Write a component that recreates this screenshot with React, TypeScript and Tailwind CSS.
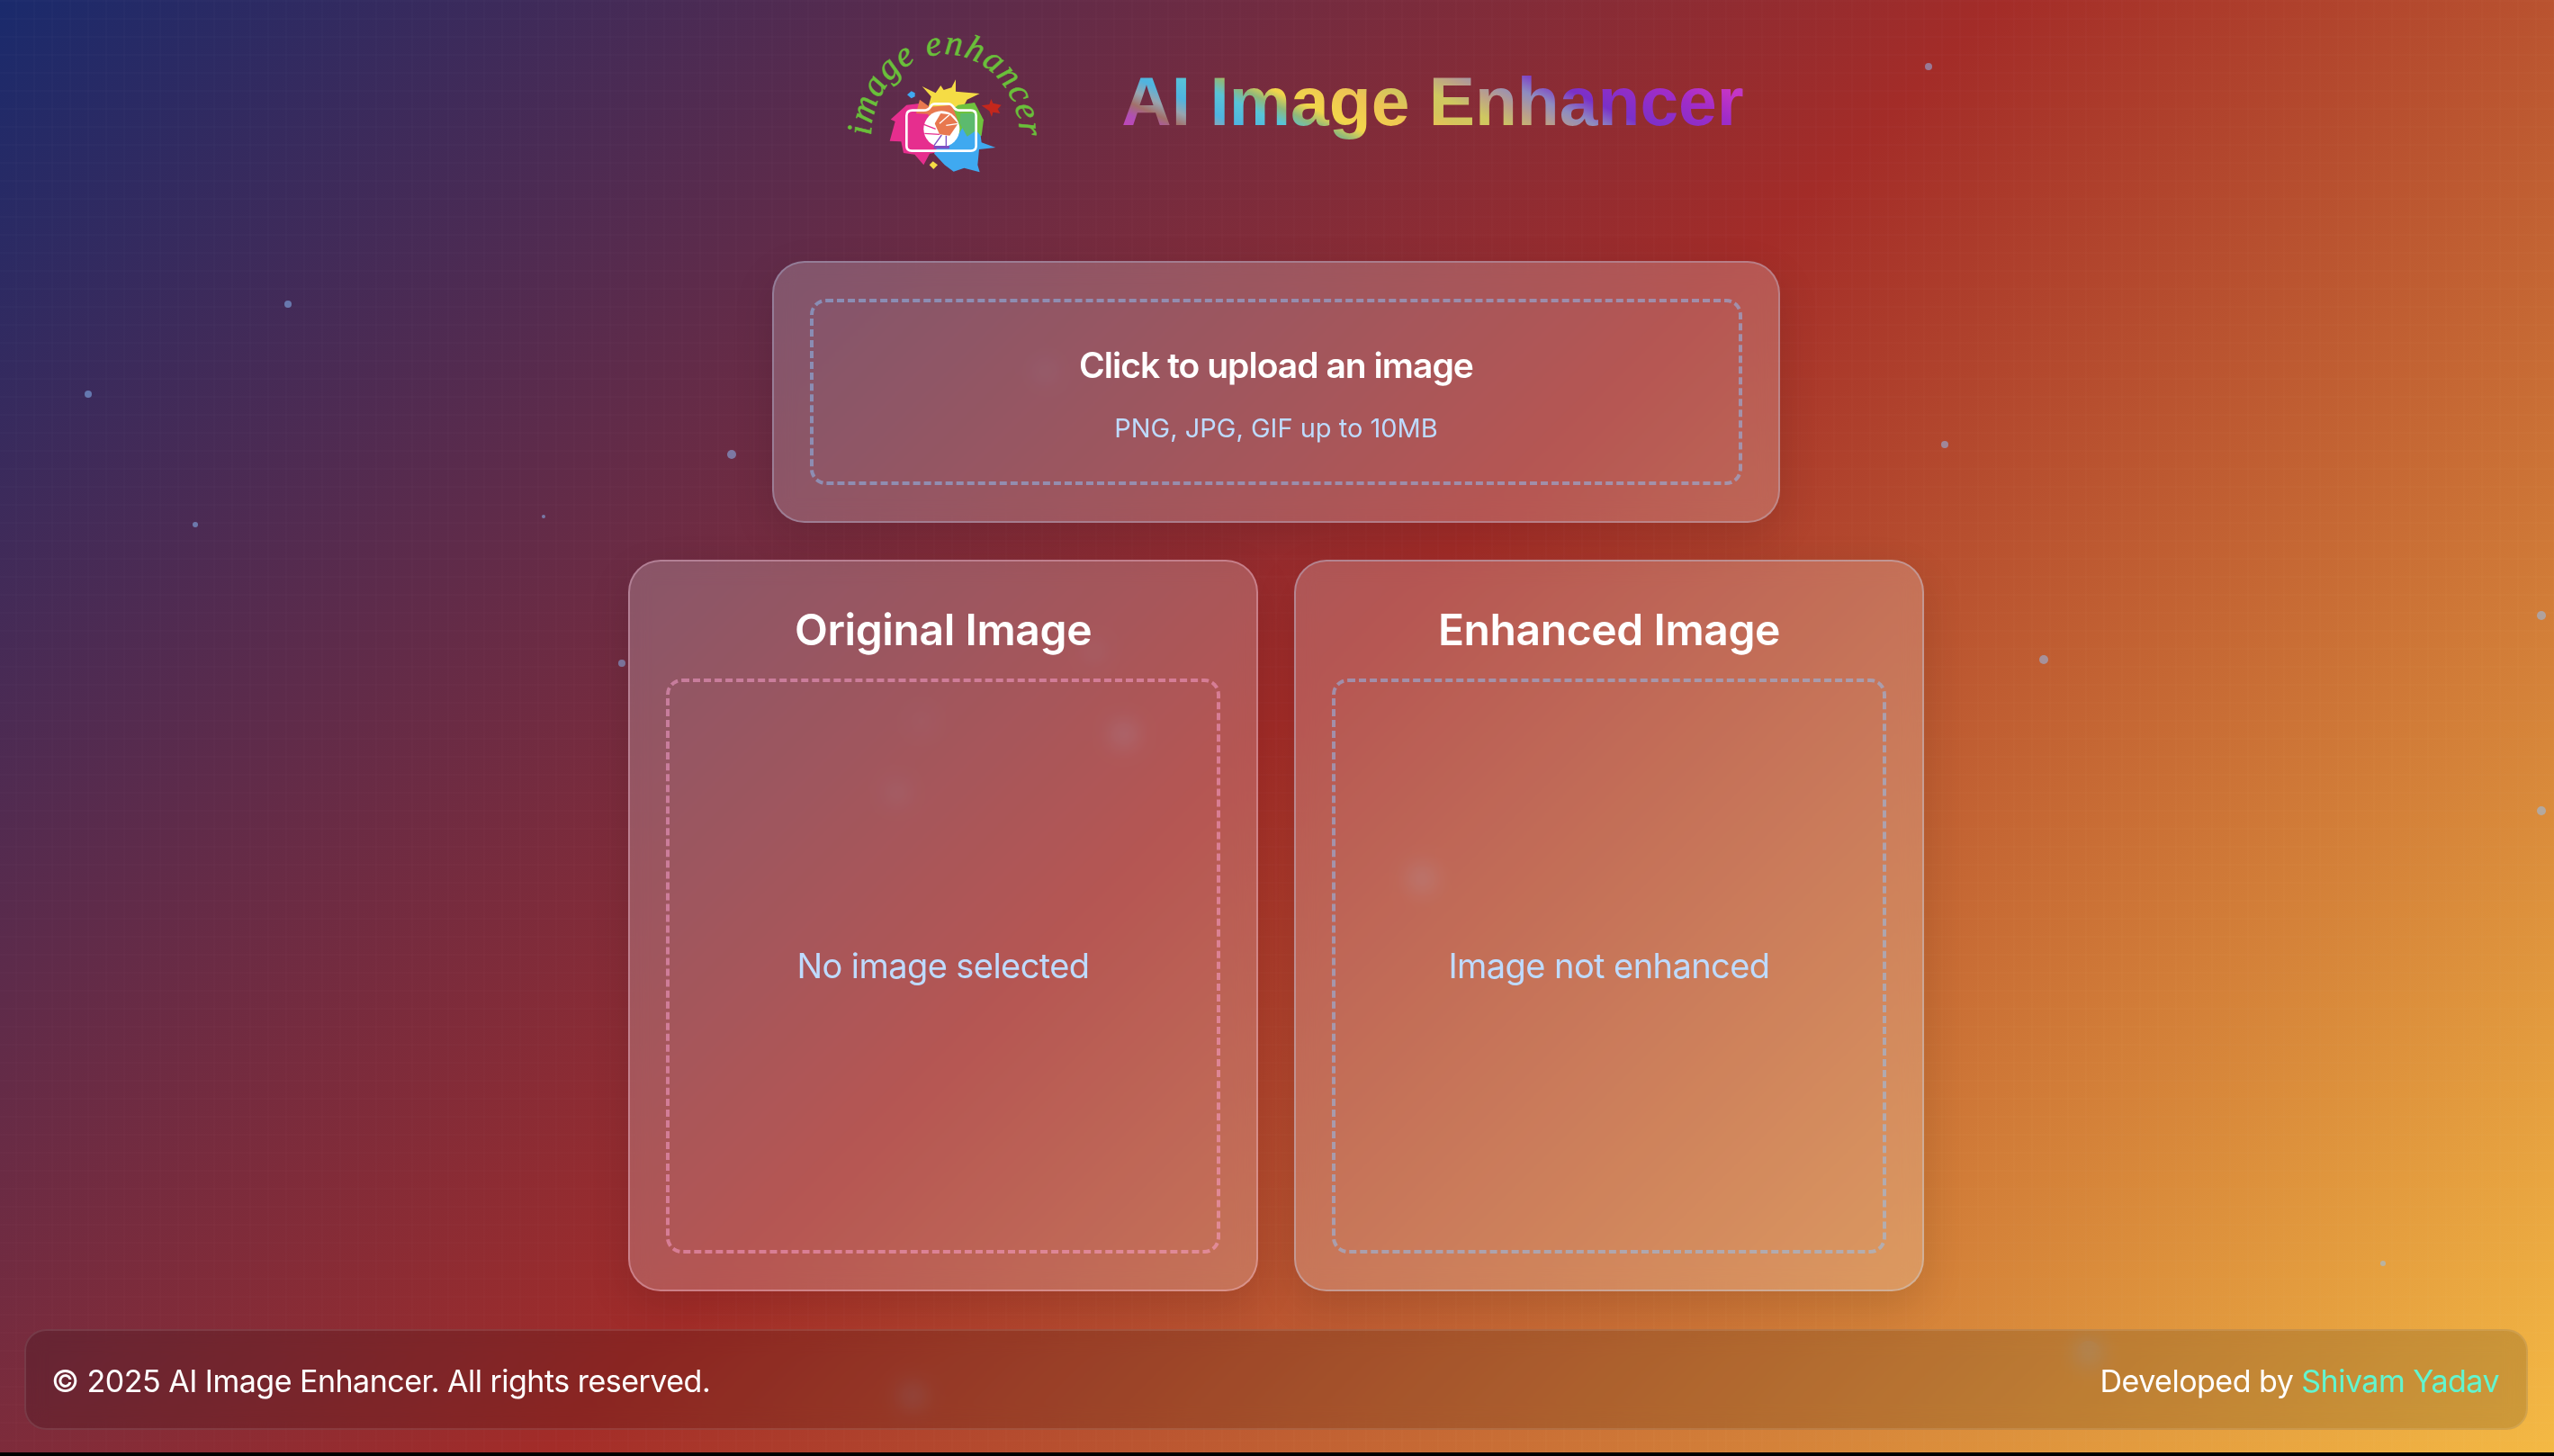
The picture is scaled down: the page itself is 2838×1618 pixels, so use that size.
const dots = [
  { x: 2143, y: 74, s: 8, o: 0.5 },
  { x: 320, y: 338, s: 8, o: 0.5 },
  { x: 98, y: 438, s: 8, o: 0.5 },
  { x: 813, y: 505, s: 10, o: 0.5 },
  { x: 217, y: 583, s: 6, o: 0.5 },
  { x: 604, y: 574, s: 4, o: 0.5 },
  { x: 2161, y: 494, s: 8, o: 0.5 },
  { x: 691, y: 737, s: 8, o: 0.5 },
  { x: 2271, y: 733, s: 10, o: 0.5 },
  { x: 2824, y: 684, s: 10, o: 0.5 },
  { x: 2824, y: 901, s: 10, o: 0.5 },
  { x: 2648, y: 1404, s: 6, o: 0.5 },
  { x: 1162, y: 413, s: 20, o: 0.12 },
  { x: 1216, y: 724, s: 20, o: 0.12 },
  { x: 1249, y: 816, s: 26, o: 0.2 },
  { x: 997, y: 881, s: 22, o: 0.12 },
  { x: 1024, y: 802, s: 18, o: 0.1 },
  { x: 1580, y: 976, s: 28, o: 0.2 },
  { x: 1014, y: 1551, s: 26, o: 0.2 },
  { x: 2321, y: 1503, s: 26, o: 0.3 },
];

function Logo() {
  return (
    <svg viewBox="0 0 780 570" className="w-[260px] h-[190px] mt-[6px] shrink-0">
      <path id="logoArc" d="M150 392 A245 272 0 0 1 645 400" fill="none" />
      <text fill="#6abf3a" stroke="#6abf3a" strokeWidth="1.5" fontFamily="'Liberation Serif', serif" fontStyle="italic" fontSize="118">
        <textPath href="#logoArc" textLength="815" lengthAdjust="spacing">image enhancer</textPath>
      </text>
      <path d="M320 228 L365 250 L382 225 L392 240 L418 232 L432 205 L432 245 L512 252 L470 272 L450 310 L340 300 L350 262 Z" fill="#f5dc45" />
      <path d="M268 290 L310 285 L340 300 L385 370 L420 440 L345 452 L325 490 L295 455 L258 450 L250 412 L212 410 L230 345 L215 338 Z" fill="#e62e8e" />
      <path d="M440 290 L495 282 L525 340 L518 392 L450 430 L410 370 L415 310 Z" fill="#6fc23e" />
      <path d="M470 340 L515 392 L518 415 L565 432 L510 438 L505 490 L512 514 L460 500 L425 512 L395 490 L360 452 L385 400 L440 390 Z" fill="#3fa9f0" />
      <path d="M312 272 L345 296 L420 290 L440 345 L410 395 L360 380 L340 320 L300 318 Z" fill="#e8784f" />
      <path d="M448 318 L500 318 L500 375 L470 395 L445 350 Z" fill="#5cba6e" />
      <path d="M550 270 L556 284 L584 290 L572 304 L580 318 L556 314 L552 330 L544 310 L518 292 L544 288 Z" fill="#c4271c" />
      <path d="M284 244 L296 250 L296 262 L284 268 L270 256 Z" fill="#3fa9f0" />
      <path d="M356 478 L372 490 L358 504 L344 490 Z" fill="#f5dc45" />
      <circle cx="385" cy="370" r="60" fill="#ffffff" />
      <path d="M382 318 L412 322 L440 352 L412 392 L378 388 L362 352 Z" fill="#e8784f" />
      <g stroke="#ffffff" strokeWidth="4">
        <path d="M360 352 L368 318" />
        <path d="M412 322 L378 352" />
        <path d="M440 352 L400 358" />
      </g>
      <g stroke="#e62e8e" strokeWidth="4">
        <path d="M326 355 L365 370" />
        <path d="M328 385 L378 388" />
      </g>
      <g stroke="#7c4fc4" strokeWidth="4">
        <path d="M360 425 L385 390" />
        <path d="M400 428 L400 392" />
      </g>
      <path d="M360 426 L412 426 L410 436 L358 436 Z" fill="#7c4fc4" />
      <path
        d="M288 308 L325 308 Q340 308 348 296 L352 290 Q356 286 362 286 L408 286 Q414 286 418 290 L424 296 Q432 308 446 308 L482 308 Q500 308 500 326 L500 426 Q500 443 482 443 L286 443 Q268 443 268 426 L268 326 Q268 308 288 308 Z"
        fill="none"
        stroke="#ffffff"
        strokeWidth="8"
      />
    </svg>
  );
}

export default function App() {
  return (
    <div className="h-screen bg-black overflow-hidden font-['Inter',sans-serif]">
      <div className="relative h-[1614px] bg-[linear-gradient(135deg,#1a2a6c,#a32c28,#f4b944)]">
        <div className="absolute inset-0 bg-[linear-gradient(rgba(255,255,255,0.013)_2px,transparent_2px),linear-gradient(90deg,rgba(255,255,255,0.013)_2px,transparent_2px)] bg-[size:20px_20px] bg-[position:17px_0px]" />
        {dots.map((d) => (
          <span
            key={d.x}
            className="absolute rounded-full bg-blue-300"
            style={{ left: d.x - d.s / 2, top: d.y - d.s / 2, width: d.s, height: d.s, opacity: d.o }}
          />
        ))}

        <div className="relative flex flex-col items-center pr-[2px]">
          <header className="h-[224px] flex items-center justify-center gap-[68px] pl-5">
            <Logo />
            <h1 className="text-[76.8px] font-bold leading-[90px] font-['Liberation_Sans',sans-serif] text-transparent bg-clip-text bg-[linear-gradient(25deg,#d23cc0,#b04fb5_8%,#a2706a_11.5%,#97a5b0_15%,#4fb4e0_19%,#58c4d8_25%,#8fb87a_29%,#f2d64b_33%,#eec454_42%,#d5c55c_47%,#cfc860_52%,#bba08a_58%,#8e8cc0_64%,#7a30c8_70%,#a02cc8_82%,#c535c5_90%,#a050d0)]">
              AI Image Enhancer
            </h1>
          </header>

          <div className="mt-[66px] w-[1120px] h-[291px] rounded-[36px] border-2 border-blue-200/30 bg-white/20 backdrop-blur-md shadow-[0_16px_48px_rgba(0,0,0,0.12)] p-[40px]">
            <div className="h-full flex flex-col items-center justify-center rounded-[18px] border-4 border-dashed border-blue-300/50">
              <p className="text-[39px] leading-[60px] font-semibold tracking-[-0.025em] text-white">Click to upload an image</p>
              <p className="mt-[20px] text-[29px] leading-[40px] text-blue-200">PNG, JPG, GIF up to 10MB</p>
            </div>
          </div>

          <div className="mt-[41px] flex gap-[40px]">
            <div className="w-[700px] h-[813px] flex flex-col rounded-[36px] border-2 border-pink-200/35 bg-white/20 backdrop-blur-md shadow-[0_16px_48px_rgba(0,0,0,0.12)] p-[40px]">
              <h2 className="text-[48px] leading-[48px] font-semibold tracking-[-0.008em] text-white text-center mt-[12px] mb-[30px]">Original Image</h2>
              <div className="flex-1 flex items-center justify-center rounded-[18px] border-4 border-dashed border-pink-300/50">
                <p className="text-[38px] tracking-[-0.015em] text-blue-200">No image selected</p>
              </div>
            </div>
            <div className="w-[700px] h-[813px] flex flex-col rounded-[36px] border-2 border-blue-200/35 bg-white/20 backdrop-blur-md shadow-[0_16px_48px_rgba(0,0,0,0.12)] p-[40px]">
              <h2 className="text-[48px] leading-[48px] font-semibold tracking-[-0.008em] text-white text-center mt-[12px] mb-[30px]">Enhanced Image</h2>
              <div className="flex-1 flex items-center justify-center rounded-[18px] border-4 border-dashed border-blue-300/50">
                <p className="text-[38px] tracking-[-0.015em] text-blue-200">Image not enhanced</p>
              </div>
            </div>
          </div>
        </div>

        <footer className="relative mt-[42px] ml-[27px] mr-[29px] h-[112px] flex items-center justify-between rounded-3xl border-2 border-white/10 bg-black/15 backdrop-blur-md pl-[28px] pr-[30px] pt-[2px] text-[34px] tracking-[-0.015em] text-white">
          <p>© 2025 AI Image Enhancer. All rights reserved.</p>
          <p>
            Developed by <span className="text-[#62f5cf]">Shivam Yadav</span>
          </p>
        </footer>
      </div>
    </div>
  );
}
